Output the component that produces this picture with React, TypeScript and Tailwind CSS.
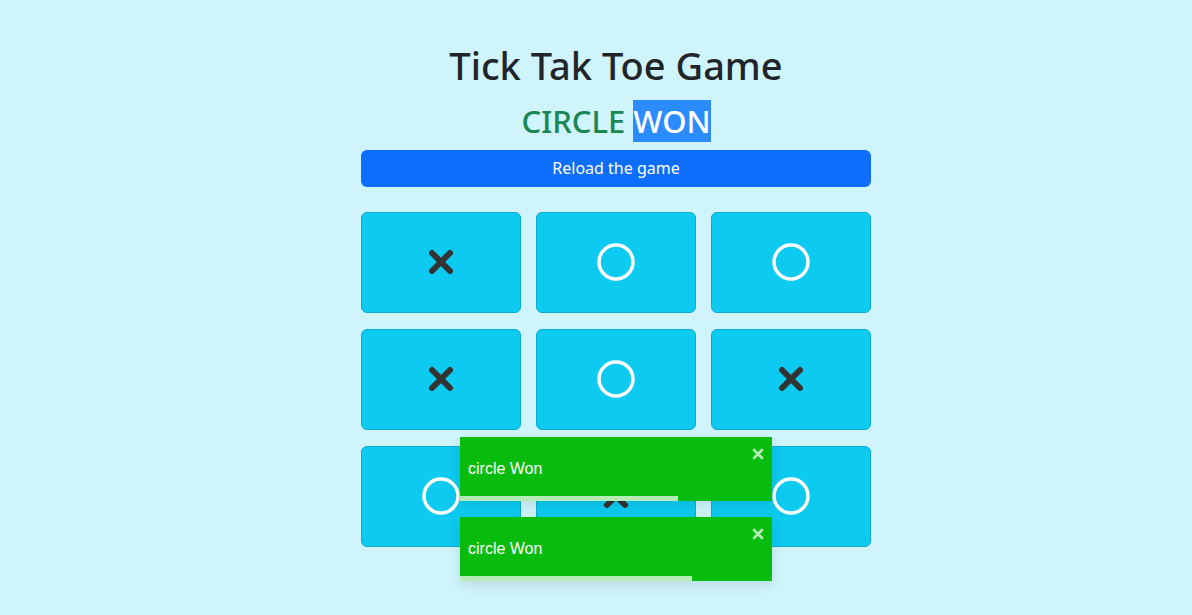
import React from 'react';

type Mark = 'x' | 'o';

const board: Mark[] = ['x', 'o', 'o', 'x', 'o', 'x', 'o', 'x', 'o'];

function Cross() {
  return (
    <svg width="28" height="28" viewBox="0 0 28 28">
      <path d="M5 5 L23 23 M23 5 L5 23" stroke="#333333" strokeWidth="6" strokeLinecap="round" />
    </svg>
  );
}

function Circle() {
  return (
    <svg width="38" height="38" viewBox="0 0 38 38">
      <circle cx="19" cy="19" r="17" fill="none" stroke="#ffffff" strokeWidth="3.5" />
    </svg>
  );
}

function Toast({ top, bar }: { top: number; bar: number }) {
  return (
    <div
      className="absolute left-[460px] w-[312px] h-[64px] bg-[#07bc0c] text-white shadow-[0_4px_12px_rgba(0,0,0,0.1)] flex items-center px-2"
      style={{ top }}
    >
      <span className="text-[16px] font-['Liberation_Sans',Arial,sans-serif]">circle Won</span>
      <span className="absolute right-[7px] top-[10px] text-white/70">
        <svg width="14" height="14" viewBox="0 0 14 14">
          <path d="M3 3 L11 11 M11 3 L3 11" stroke="currentColor" strokeWidth="2.6" strokeLinecap="round" />
        </svg>
      </span>
      <div className="absolute left-0 bottom-0 h-[5px] bg-white/70" style={{ width: bar }} />
    </div>
  );
}

export default function App() {
  return (
    <main className="relative min-h-[615px] bg-[#cff4fc] font-['Noto_Sans','Open_Sans',sans-serif] text-[#212529] overflow-hidden">
      <div className="flex justify-center pl-[40px] pt-[43px]">
        <div className="w-[510px]">
          <h1 className="text-center text-[38px] font-medium leading-[1.2] mb-[11px]">Tick Tak Toe Game</h1>
          <h2 className="text-center text-[31px] font-medium leading-[43px] mb-[7px]">
            <span className="text-[#198754]">CIRCLE</span>{' '}
            <span className="inline-block align-top h-[42px] leading-[42px] bg-[#2b8cff] text-white">WON</span>
          </h2>
          <button className="w-full h-[37px] bg-[#0d6efd] text-white text-[16px] rounded-[6px]">
            Reload the game
          </button>
          <div className="grid grid-cols-3 gap-x-[15px] gap-y-[16px] mt-[25px]">
            {board.map((m, i) => (
              <div
                key={i}
                className="h-[101px] bg-[#0dcaf0] border border-[#0babd0] rounded-[6px] flex items-center justify-center"
              >
                {m === 'x' ? <Cross /> : <Circle />}
              </div>
            ))}
          </div>
        </div>
      </div>
      <Toast top={437} bar={218} />
      <Toast top={517} bar={232} />
    </main>
  );
}
